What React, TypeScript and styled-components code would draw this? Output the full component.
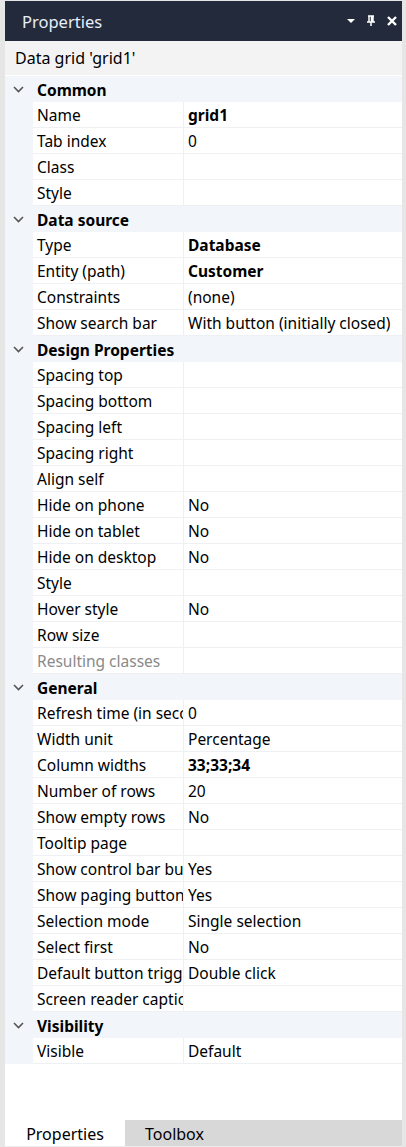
import React from "react";
import styled, { createGlobalStyle } from "styled-components";

const Global = createGlobalStyle`
  html, body { margin: 0; padding: 0; background: #e6e6e6; }
  #root { height: 1147px; }
`;

const Frame = styled.div`
  height: 1147px;
  box-sizing: border-box;
  padding: 1px 4px 0 5px;
  display: flex;
  flex-direction: column;
  font-family: "Noto Sans", "Open Sans", sans-serif;
  color: #000;
`;

const TitleBar = styled.div`
  height: 40px;
  flex: none;
  background: #232a3b;
  display: flex;
  align-items: center;
  padding: 0 4px 0 17px;
  box-sizing: border-box;
`;

const Title = styled.div`
  flex: 1;
  color: #e8eefa;
  font-size: 16.5px;
`;

const TitleIcons = styled.div`
  display: flex;
  align-items: center;
  gap: 10px;
`;

const Subtitle = styled.div`
  height: 35px;
  flex: none;
  background: #f3f3f3;
  display: flex;
  align-items: center;
  padding-left: 10px;
  font-size: 16px;
  border-bottom: 1px solid #ffffff;
  box-sizing: border-box;
`;

const Grid = styled.div`
  flex: 1;
  background: #ffffff;
  display: flex;
  flex-direction: column;
`;

const GroupHeader = styled.div`
  height: 26px;
  background: #f2f5fa;
  display: flex;
  align-items: center;
  font-weight: bold;
  font-size: 15.5px;
  box-sizing: border-box;
  padding-top: 1px;
`;

const Chevron = styled.div`
  width: 32px;
  flex: none;
  display: flex;
  align-items: center;
  justify-content: center;
  padding-right: 5px;
  box-sizing: border-box;
`;

const Row = styled.div`
  height: 26px;
  display: flex;
  box-sizing: border-box;
`;

const Gutter = styled.div`
  width: 28px;
  flex: none;
  background: #f2f5fa;
`;

const NameCell = styled.div<{ $disabled?: boolean }>`
  width: 151px;
  flex: none;
  border-right: 1px solid #eef0f3;
  border-bottom: 1px solid #eef0f3;
  padding: 1px 0 0 4px;
  box-sizing: border-box;
  font-size: 15.5px;
  line-height: 24px;
  white-space: nowrap;
  overflow: hidden;
  color: ${(p) => (p.$disabled ? "#8a8a8a" : "#000")};
`;

const ValueCell = styled.div<{ $bold?: boolean }>`
  flex: 1;
  min-width: 0;
  border-bottom: 1px solid #eef0f3;
  padding: 1px 0 0 4px;
  box-sizing: border-box;
  font-size: 15.5px;
  line-height: 24px;
  white-space: nowrap;
  overflow: hidden;
  font-weight: ${(p) => (p.$bold ? "bold" : "normal")};
`;

const TabBar = styled.div`
  height: 27px;
  flex: none;
  background: #d8d8d8;
  display: flex;
  border-bottom: 1px solid #ececec;
  box-sizing: border-box;
`;

const Tab = styled.div<{ $active?: boolean }>`
  width: 120px;
  background: ${(p) => (p.$active ? "#ffffff" : "transparent")};
  font-size: 16px;
  display: flex;
  align-items: center;
  justify-content: ${(p) => (p.$active ? "center" : "flex-start")};
  padding: 2px 0 0 ${(p) => (p.$active ? "0" : "20px")};
  box-sizing: border-box;
`;

type Prop = { n: string; v?: string; b?: boolean; d?: boolean };
type Group = { title: string; props: Prop[] };

const groups: Group[] = [
  {
    title: "Common",
    props: [
      { n: "Name", v: "grid1", b: true },
      { n: "Tab index", v: "0" },
      { n: "Class" },
      { n: "Style" },
    ],
  },
  {
    title: "Data source",
    props: [
      { n: "Type", v: "Database", b: true },
      { n: "Entity (path)", v: "Customer", b: true },
      { n: "Constraints", v: "(none)" },
      { n: "Show search bar", v: "With button (initially closed)" },
    ],
  },
  {
    title: "Design Properties",
    props: [
      { n: "Spacing top" },
      { n: "Spacing bottom" },
      { n: "Spacing left" },
      { n: "Spacing right" },
      { n: "Align self" },
      { n: "Hide on phone", v: "No" },
      { n: "Hide on tablet", v: "No" },
      { n: "Hide on desktop", v: "No" },
      { n: "Style" },
      { n: "Hover style", v: "No" },
      { n: "Row size" },
      { n: "Resulting classes", d: true },
    ],
  },
  {
    title: "General",
    props: [
      { n: "Refresh time (in seconds)", v: "0" },
      { n: "Width unit", v: "Percentage" },
      { n: "Column widths", v: "33;33;34", b: true },
      { n: "Number of rows", v: "20" },
      { n: "Show empty rows", v: "No" },
      { n: "Tooltip page" },
      { n: "Show control bar buttons", v: "Yes" },
      { n: "Show paging buttons", v: "Yes" },
      { n: "Selection mode", v: "Single selection" },
      { n: "Select first", v: "No" },
      { n: "Default button trigger", v: "Double click" },
      { n: "Screen reader caption" },
    ],
  },
  {
    title: "Visibility",
    props: [{ n: "Visible", v: "Default" }],
  },
];

const ChevronIcon = () => (
  <svg width="11" height="7" viewBox="0 0 11 7">
    <path d="M1 1 L5.5 5.5 L10 1" fill="none" stroke="#555" strokeWidth="1.6" />
  </svg>
);

export default function App() {
  return (
    <>
      <Global />
      <Frame>
        <TitleBar>
          <Title>Properties</Title>
          <TitleIcons>
            <svg width="10" height="10" viewBox="0 0 10 10">
              <path d="M1 3 H9 L5 7 Z" fill="#fff" />
            </svg>
            <svg width="10" height="12" viewBox="0 0 10 12">
              <path d="M2 1 H8 M3 1 V7 M7 1 V7 M5.5 1 V7 M1 7 H9 M5 7 V11" fill="none" stroke="#fff" strokeWidth="1.5" />
            </svg>
            <svg width="12" height="12" viewBox="0 0 12 12">
              <path d="M2 2 L10 10 M10 2 L2 10" stroke="#fff" strokeWidth="2.4" />
            </svg>
          </TitleIcons>
        </TitleBar>
        <Subtitle>Data grid 'grid1'</Subtitle>
        <Grid>
          {groups.map((g) => (
            <React.Fragment key={g.title}>
              <GroupHeader>
                <Chevron>
                  <ChevronIcon />
                </Chevron>
                {g.title}
              </GroupHeader>
              {g.props.map((p, i) => (
                <Row key={i}>
                  <Gutter />
                  <NameCell $disabled={p.d}>{p.n}</NameCell>
                  <ValueCell $bold={p.b}>{p.v ?? ""}</ValueCell>
                </Row>
              ))}
            </React.Fragment>
          ))}
        </Grid>
        <TabBar>
          <Tab $active>Properties</Tab>
          <Tab>Toolbox</Tab>
        </TabBar>
      </Frame>
    </>
  );
}
